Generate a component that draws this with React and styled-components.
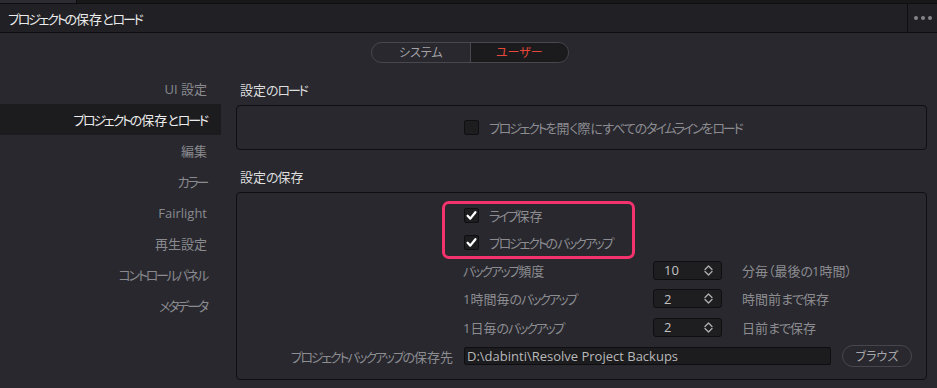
import React from "react";
import styled, { createGlobalStyle } from "styled-components";

const GlobalStyle = createGlobalStyle`
  html, body { margin: 0; padding: 0; background: #28282e; }
  body {
    font-family: "Open Sans", "Noto Sans CJK JP", sans-serif;
    font-feature-settings: "palt";
    -webkit-font-smoothing: antialiased;
  }
  * { box-sizing: border-box; }
`;

const Kata = styled.span`
  letter-spacing: -2.2px;
`;

const Hira = styled.span`
  letter-spacing: -1px;
`;

/* Katakana in the reference font is narrower than in Noto Sans CJK: tighten those runs */
const JP = ({ text }) =>
  text
    .split(/([\u30A0-\u30FF]+|[\u3040-\u309F]+)/)
    .filter(Boolean)
    .map((part, i) => {
      if (/^[\u30A0-\u30FF]+$/.test(part)) return <Kata key={i}>{part}</Kata>;
      if (/^[\u3040-\u309F]+$/.test(part)) return <Hira key={i}>{part}</Hira>;
      return <React.Fragment key={i}>{part}</React.Fragment>;
    });

const Page = styled.div`
  width: 937px;
  height: 388px;
  overflow: hidden;
  background: #28282e;
  display: flex;
  flex-direction: column;
`;

const TopStrip = styled.div`
  height: 4px;
  background: #18181a;
  border-bottom: 1px solid #0e0e10;
  display: flex;
`;

const TopTab = styled.div`
  width: 77px;
  background: #2b2b31;
  border-right: 1px solid #0e0e10;
`;

const HeaderBar = styled.div`
  height: 29px;
  background: #212125;
  border-bottom: 1px solid #0e0e10;
  display: flex;
  align-items: center;
`;

const Title = styled.div`
  flex: 1;
  padding-left: 8px;
  color: #ececec;
  font-size: 13px;
`;

const MoreButton = styled.div`
  width: 30px;
  height: 100%;
  border-left: 1px solid #0e0e10;
  display: flex;
  align-items: center;
  justify-content: center;
  gap: 3px;
`;

const Dot = styled.span`
  width: 4px;
  height: 4px;
  border-radius: 50%;
  background: #85858a;
`;

const ToggleRow = styled.div`
  padding-top: 9px;
  display: flex;
  justify-content: center;
  padding-left: 3px;
`;

const Toggle = styled.div`
  width: 198px;
  height: 21px;
  border: 1px solid #48484e;
  border-radius: 11px;
  overflow: hidden;
  display: flex;
`;

const Segment = styled.div`
  flex: 1;
  text-align: center;
  font-size: 12px;
  line-height: 19px;
  color: ${(p) => (p.$active ? "#e8483a" : "#a2a2a7")};
  background: ${(p) => (p.$active ? "#1b1b1e" : "transparent")};
  & + & { border-left: 1px solid #48484e; }
`;

const Body = styled.div`
  display: flex;
  margin-top: 10px;
`;

const Sidebar = styled.div`
  width: 221px;
  display: flex;
  flex-direction: column;
`;

const NavItem = styled.div`
  height: 31px;
  display: flex;
  align-items: center;
  justify-content: flex-end;
  padding-right: 14px;
  font-size: 13px;
  color: ${(p) => (p.$active ? "#ececec" : "#8a8a8f")};
  background: ${(p) => (p.$active ? "#1c1c1f" : "transparent")};
`;

const Content = styled.div`
  flex: 1;
  margin-left: 15px;
  margin-right: 10px;
`;

const SectionTitle = styled.div`
  height: 32px;
  display: flex;
  align-items: center;
  padding-left: 4px;
  font-size: 13px;
  color: #dedede;
  margin-top: ${(p) => (p.$spaced ? "10px" : "0")};
`;

const Box = styled.div`
  position: relative;
  border: 1px solid #0f0f11;
  border-radius: 4px;
  height: ${(p) => p.$height}px;
  padding-top: ${(p) => p.$padTop || 0}px;
  display: flex;
  flex-direction: column;
  justify-content: ${(p) => (p.$center ? "center" : "flex-start")};
`;

const CheckRow = styled.div`
  height: ${(p) => p.$h}px;
  display: flex;
  align-items: center;
  gap: 10px;
  padding-left: 227px;
`;

const CheckBoxEl = styled.span`
  width: 15px;
  height: 15px;
  border-radius: 2px;
  background: #1d1d20;
  border: 1px solid #0f0f11;
  display: inline-flex;
  align-items: center;
  justify-content: center;
  flex-shrink: 0;
`;

const Label = styled.span`
  font-size: 13px;
  color: #8c8c91;
  white-space: nowrap;
  text-align: ${(p) => (p.$right ? "right" : "left")};
`;

const SpinRow = styled.div`
  height: 28.5px;
  display: grid;
  grid-template-columns: 190px 69px 1fr;
  align-items: center;
  padding-left: 226px;
`;

const SpinBox = styled.div`
  height: 19px;
  border: 1px solid #0f0f11;
  border-radius: 3px;
  background: #1e1e21;
  display: flex;
  align-items: center;
  justify-content: space-between;
  padding: 0 8px 0 10px;
  font-size: 13px;
  color: #c2c2c4;
`;

const Unit = styled.span`
  margin-left: 20px;
  font-size: 13px;
  color: #8c8c91;
  white-space: nowrap;
`;

const PathRow = styled.div`
  height: 29px;
  display: grid;
  grid-template-columns: 216px 368px 71px;
  column-gap: 10px;
  align-items: center;
`;

const PathInput = styled.div`
  height: 18px;
  margin-left: 1px;
  background: #1c1c1e;
  border: 1px solid #0f0f11;
  border-radius: 2px;
  padding-left: 2px;
  font-size: 13px;
  line-height: 16px;
  color: #b8b8ba;
  white-space: nowrap;
  overflow: hidden;
`;

const BrowseButton = styled.div`
  height: 22px;
  margin-left: 1px;
  border: 1px solid #46464c;
  border-radius: 11px;
  display: flex;
  align-items: center;
  justify-content: center;
  font-size: 12px;
  color: #a6a6ab;
`;

const Highlight = styled.div`
  position: absolute;
  left: 205px;
  top: 8px;
  width: 193px;
  height: 58px;
  border: 3px solid #f4326d;
  border-radius: 7px;
  pointer-events: none;
`;

const Check = ({ checked }) => (
  <CheckBoxEl>
    {checked && (
      <svg width="13" height="13" viewBox="0 0 13 13">
        <path d="M2.6 6.8 L5.3 9.6 L10.4 3.2" fill="none" stroke="#ffffff" strokeWidth="2.3" strokeLinecap="round" strokeLinejoin="round" />
      </svg>
    )}
  </CheckBoxEl>
);

const SpinIcon = () => (
  <svg width="9" height="11" viewBox="0 0 9 11">
    <path d="M1 4.5 L4.5 1 L8 4.5 M1 6.5 L4.5 10 L8 6.5" fill="none" stroke="#b0b0b3" strokeWidth="1.3" strokeLinecap="round" strokeLinejoin="round" />
  </svg>
);

const navItems = ["UI 設定", "プロジェクトの保存とロード", "編集", "カラー", "Fairlight", "再生設定", "コントロールパネル", "メタデータ"];

const spinRows = [
  { label: "バックアップ頻度", value: "10", unit: "分毎（最後の1時間）" },
  { label: "1時間毎のバックアップ", value: "2", unit: "時間前まで保存" },
  { label: "1日毎のバックアップ", value: "2", unit: "日前まで保存" },
];

export default function App() {
  return (
    <Page>
      <GlobalStyle />
      <TopStrip>
        <TopTab />
      </TopStrip>
      <HeaderBar>
        <Title><JP text="プロジェクトの保存とロード" /></Title>
        <MoreButton>
          <Dot />
          <Dot />
          <Dot />
        </MoreButton>
      </HeaderBar>
      <ToggleRow>
        <Toggle>
          <Segment>システム</Segment>
          <Segment $active>ユーザー</Segment>
        </Toggle>
      </ToggleRow>
      <Body>
        <Sidebar>
          {navItems.map((n, i) => (
            <NavItem key={n} $active={i === 1}><JP text={n} /></NavItem>
          ))}
        </Sidebar>
        <Content>
          <SectionTitle><JP text="設定のロード" /></SectionTitle>
          <Box $height={45} $center>
            <CheckRow $h={20}>
              <Check />
              <Label><JP text="プロジェクトを開く際にすべてのタイムラインをロード" /></Label>
            </CheckRow>
          </Box>
          <SectionTitle $spaced><JP text="設定の保存" /></SectionTitle>
          <Box $height={188} $padTop={9}>
            <CheckRow $h={27}>
              <Check checked />
              <Label><JP text="ライブ保存" /></Label>
            </CheckRow>
            <CheckRow $h={27}>
              <Check checked />
              <Label><JP text="プロジェクトのバックアップ" /></Label>
            </CheckRow>
            {spinRows.map((r) => (
              <SpinRow key={r.label}>
                <Label><JP text={r.label} /></Label>
                <SpinBox>
                  <span>{r.value}</span>
                  <SpinIcon />
                </SpinBox>
                <Unit><JP text={r.unit} /></Unit>
              </SpinRow>
            ))}
            <PathRow>
              <Label $right><JP text="プロジェクトバックアップの保存先" /></Label>
              <PathInput>D:\dabinti\Resolve Project Backups</PathInput>
              <BrowseButton>ブラウズ</BrowseButton>
            </PathRow>
            <Highlight />
          </Box>
        </Content>
      </Body>
    </Page>
  );
}
